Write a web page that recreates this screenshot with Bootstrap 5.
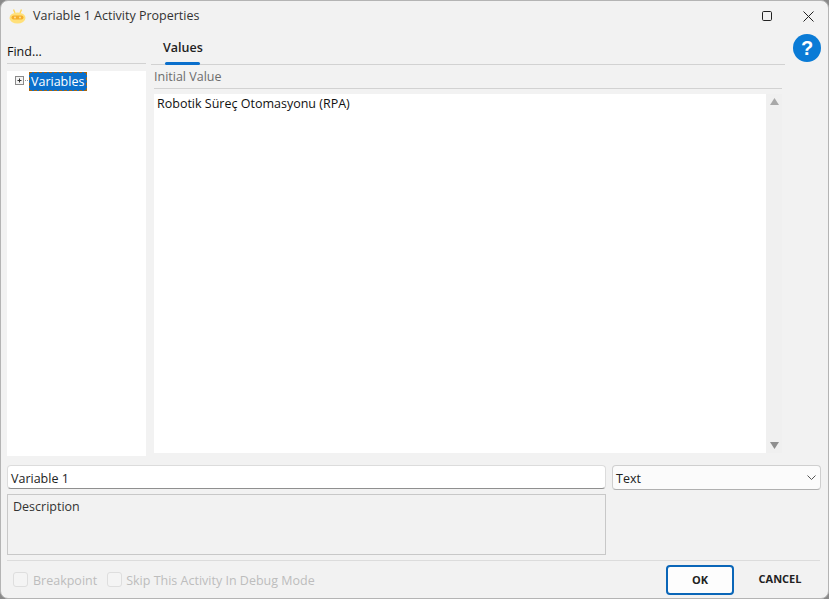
<!DOCTYPE html>
<html lang="en"><head><meta charset="utf-8">
<title>Variable 1 Activity Properties</title>
<link rel="stylesheet" href="https://cdn.jsdelivr.net/npm/bootstrap@5.3.0/dist/css/bootstrap.min.css">
<style>
html,body{height:100%;margin:0;background:#8a8a8a;}
body{font-family:"Open Sans","Noto Sans",sans-serif;font-size:12.5px;color:#1a1a1a;line-height:16px;}
.dlg{width:829px;height:599px;background:#f2f2f2;border:1px solid #b4b4b4;border-radius:8px;overflow:hidden;}
.titlebar{height:30px;padding-left:8px;}
.titletxt{margin-left:7px;color:#333;}
.winbtn{width:43px;height:30px;}
.winbtn-close{width:40px;}
.mainrow{padding:0 0 0 6px;height:425px;}
.leftcol{width:139px;flex:none;}
.findbox{height:33px;padding:13px 0 0 0;border-bottom:1px solid #d2d2d2;color:#111;}
.treebox{margin-top:7px;height:385px;background:#fff;padding:1px 0 0 8px;}
.sel{background:#0a6fcc;color:#fff;outline:1px dashed #a8650f;outline-offset:-1px;padding:1px 3px 0 2px;height:19px;line-height:17px;}
.rightcol{width:634px;margin-left:5px;flex:none;}
.tabsbar{height:34px;border-bottom:1px solid #d2d2d2;position:relative;padding:9px 0 0 12px;font-weight:600;color:#222;}
.tabline{position:absolute;left:14px;bottom:-1px;width:35px;height:3px;background:#0a6fcc;border-radius:2px;}
.ivlabel{margin-left:3px;height:24px;border-bottom:1px solid #d2d2d2;width:628px;color:#6d6d6d;padding-top:4px;}
.editbox{margin:5px 0 0 3px;width:628px;height:359px;background:#fff;}
.edtext{padding:2px 3px;color:#111;}
.vscroll{width:16px;background:#f0f0f0;}
.helpcol{width:42px;flex:none;padding:3px 0 0 8px;}
.namerow{padding:9px 0 0 6px;}
.nameinput{width:599px;height:24px;background:#fff;border:1px solid #dcdcdc;border-bottom-color:#8f8f8f;border-radius:4px;padding:5px 3px 0;color:#222;}
.typesel{width:209px;height:25px;margin-left:6px;background:#fbfbfb;border:1px solid #cfcfcf;border-bottom-color:#b0b0b0;border-radius:4px;padding:4px 3px 1px;color:#222;}
.chev{margin:-3px 1px 0 0;}
.descbox{margin:4px 0 0 6px;width:599px;height:61px;border:1px solid #c8c8c8;padding:4px 5px;color:#333;}
.footer{margin:5px 8px 0 6px;border-top:1px solid #dcdcdc;height:38px;}
.ghostchk{width:15px;height:15px;border:1px solid #dedede;border-radius:3px;background:#f4f4f4;}
.ghostchk-first{margin:0 5px 0 6px;}
.ghostchk-second{margin:0 4px 0 0;}
.ghost{color:#bdbdbd;margin-right:10px;padding-top:2px;}
.okbtn{width:68px;height:30px;border:2px solid #0a66b8;border-radius:4px;background:#fdfdfd;font-size:11px;font-weight:700;color:#222;line-height:26px;padding:0;}
.cancelbtn{width:68px;height:30px;margin-left:12px;border:0;background:transparent;font-size:11px;font-weight:700;color:#222;padding:0;margin-right:6px;}
</style></head>
<body>
<div class="dlg d-flex flex-column">
  <div class="titlebar d-flex align-items-center">
    <svg width="17" height="15" viewBox="0 0 17 15"><path d="M4.500 0.500l1.500 3.500M12.500 0.500l-1.500 3.500" stroke="#ffd75e" stroke-width="1.4" fill="none"/><ellipse cx="8.500" cy="9" rx="8" ry="5.500" fill="#ffe07a"/><rect x="2.500" y="6.500" width="12" height="4" rx="2" fill="#f5ae2c"/><circle cx="6" cy="8.500" r=".9" fill="#ffe9a8"/><circle cx="11" cy="8.500" r=".9" fill="#ffe9a8"/></svg>
    <span class="titletxt flex-grow-1">Variable 1 Activity Properties</span>
    <div class="winbtn d-flex align-items-center justify-content-center"><svg width="10" height="10" viewBox="0 0 10 10"><rect x=".5" y=".5" width="9" height="9" rx="1.200" fill="none" stroke="#222"/></svg></div>
    <div class="winbtn winbtn-close d-flex align-items-center justify-content-center"><svg width="11" height="11" viewBox="0 0 11 11"><path d="M.5.5l10 10M10.500.5l-10 10" stroke="#222" fill="none"/></svg></div>
  </div>
  <div class="mainrow d-flex">
    <div class="leftcol">
      <div class="findbox">Find...</div>
      <div class="treebox d-flex align-items-start">
        <svg class="mt-1" width="14" height="9" viewBox="0 0 14 9"><rect x=".5" y=".5" width="8" height="8" fill="#f4f4f4" stroke="#8a8a8a"/><path d="M2.500 4.500h4M4.500 2.500v4" stroke="#333"/><path d="M10 4.500h4" stroke="#999" stroke-dasharray="1 1"/></svg>
        <span class="sel">Variables</span>
      </div>
    </div>
    <div class="rightcol">
      <div class="tabsbar">Values<div class="tabline"></div></div>
      <div class="ivlabel">Initial Value</div>
      <div class="editbox d-flex">
        <div class="edtext flex-grow-1">Robotik Süreç Otomasyonu (RPA)</div>
        <div class="vscroll d-flex flex-column justify-content-between align-items-center py-1">
          <svg width="9" height="7" viewBox="0 0 9 7"><path d="M4.500 0l4.500 7H0z" fill="#a8a8a8"/></svg>
          <svg width="9" height="7" viewBox="0 0 9 7"><path d="M4.500 7L9 0H0z" fill="#8f8f8f"/></svg>
        </div>
      </div>
    </div>
    <div class="helpcol"><svg width="28" height="28" viewBox="0 0 28 28"><circle cx="14" cy="14" r="14" fill="#0a7bd6"/><text x="14" y="21" text-anchor="middle" font-family="Liberation Sans,sans-serif" font-weight="700" font-size="20" fill="#fff">?</text></svg></div>
  </div>
  <div class="namerow d-flex">
    <div class="nameinput">Variable 1</div>
    <div class="typesel d-flex justify-content-between align-items-center"><span>Text</span><svg class="chev" width="9" height="5" viewBox="0 0 9 5"><path d="M.5.5l4 4 4-4" stroke="#555" fill="none"/></svg></div>
  </div>
  <div class="descbox">Description</div>
  <div class="footer d-flex align-items-center">
    <div class="ghostchk ghostchk-first"></div><span class="ghost">Breakpoint</span>
    <div class="ghostchk ghostchk-second"></div><span class="ghost">Skip This Activity In Debug Mode</span>
    <button class="okbtn ms-auto btn" type="button">OK</button>
    <button class="cancelbtn btn" type="button">CANCEL</button>
  </div>
</div>
<script src="https://cdn.jsdelivr.net/npm/bootstrap@5.3.0/dist/js/bootstrap.bundle.min.js"></script>
</body></html>
